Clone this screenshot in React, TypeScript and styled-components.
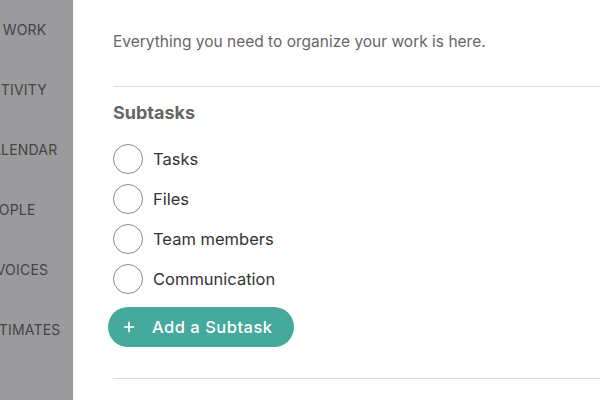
import React from 'react';
import styled, { createGlobalStyle } from 'styled-components';

const GlobalStyle = createGlobalStyle`
    html, body {
        margin: 0;
        padding: 0;
        background: #fff;
        font-family: Inter, "Liberation Sans", sans-serif;
    }
`;

const navItems = [
    { label: 'My Work', shift: -5 },
    { label: 'Activity', shift: 0 },
    { label: 'Calendar', shift: 0 },
    { label: 'People', shift: 0 },
    { label: 'Invoices', shift: 0 },
    { label: 'Estimates', shift: 0 },
];
const subtasks = ['Tasks', 'Files', 'Team members', 'Communication'];

export default function App() {
    return (
        <Page>
            <GlobalStyle />
            <Sidebar>
                <NavList>
                    {navItems.map((item) => (
                        <NavItem key={item.label} $shift={item.shift}>{item.label}</NavItem>
                    ))}
                </NavList>
            </Sidebar>
            <Main>
                <Description>Everything you need to organize your work is here.</Description>
                <Divider />
                <Heading>Subtasks</Heading>
                <SubtaskList>
                    {subtasks.map((task) => (
                        <SubtaskRow key={task}>
                            <Check />
                            <SubtaskLabel>{task}</SubtaskLabel>
                        </SubtaskRow>
                    ))}
                </SubtaskList>
                <AddButton>
                    <PlusIcon viewBox="0 0 14 14">
                        <path d="M7 1v12M1 7h12" stroke="#fff" strokeWidth="2" />
                    </PlusIcon>
                    Add a Subtask
                </AddButton>
                <Divider />
            </Main>
        </Page>
    );
}

const Page = styled.div`
    display: flex;
    height: 400px;
    overflow: hidden;
`;

const Sidebar = styled.nav`
    width: 73px;
    flex-shrink: 0;
    background-color: #9b9b9d;
    overflow: hidden;
`;

const NavList = styled.ul`
    list-style: none;
    margin: 0 0 0 -19px;
    padding: 0;
    width: 200px;
`;

const NavItem = styled.li<{ $shift: number }>`
    height: 60px;
    margin-left: ${(p) => p.$shift}px;
    line-height: 60px;
    font-size: 14px;
    letter-spacing: 0.2px;
    text-transform: uppercase;
    color: #444;
    white-space: nowrap;
`;

const Main = styled.main`
    flex: 1;
    padding: 30px 0 0 40px;
`;

const Description = styled.p`
    margin: 0;
    font-size: 15.5px;
    line-height: 24px;
    color: #666;
`;

const Divider = styled.hr`
    margin: 32px 0 0;
    border: none;
    border-top: 1px solid #dcdcdc;
`;

const Heading = styled.h3`
    margin: 14px 0 0;
    font-size: 18px;
    line-height: 24px;
    font-weight: 700;
    color: #666;
`;

const SubtaskList = styled.div`
    display: flex;
    flex-direction: column;
    gap: 10px;
    margin-top: 19px;
`;

const SubtaskRow = styled.div`
    display: flex;
    align-items: center;
    gap: 10px;
`;

const Check = styled.span`
    width: 28px;
    height: 28px;
    border: 1px solid #8a8a8a;
    border-radius: 50%;
`;

const SubtaskLabel = styled.span`
    font-size: 16.5px;
    color: #333;
`;

const AddButton = styled.button`
    display: flex;
    align-items: center;
    gap: 17px;
    margin: 13px 0 0 -5px;
    height: 40px;
    padding: 0 21px 0 15px;
    border: none;
    border-radius: 20px;
    background-color: #45a99b;
    color: #fff;
    font-family: Inter, "Liberation Sans", sans-serif;
    font-size: 16.5px;
    font-weight: 500;
    letter-spacing: 0.5px;
    cursor: pointer;
    & + hr {
        margin-top: 31px;
    }
`;

const PlusIcon = styled.svg`
    width: 12px;
    height: 12px;
`;
